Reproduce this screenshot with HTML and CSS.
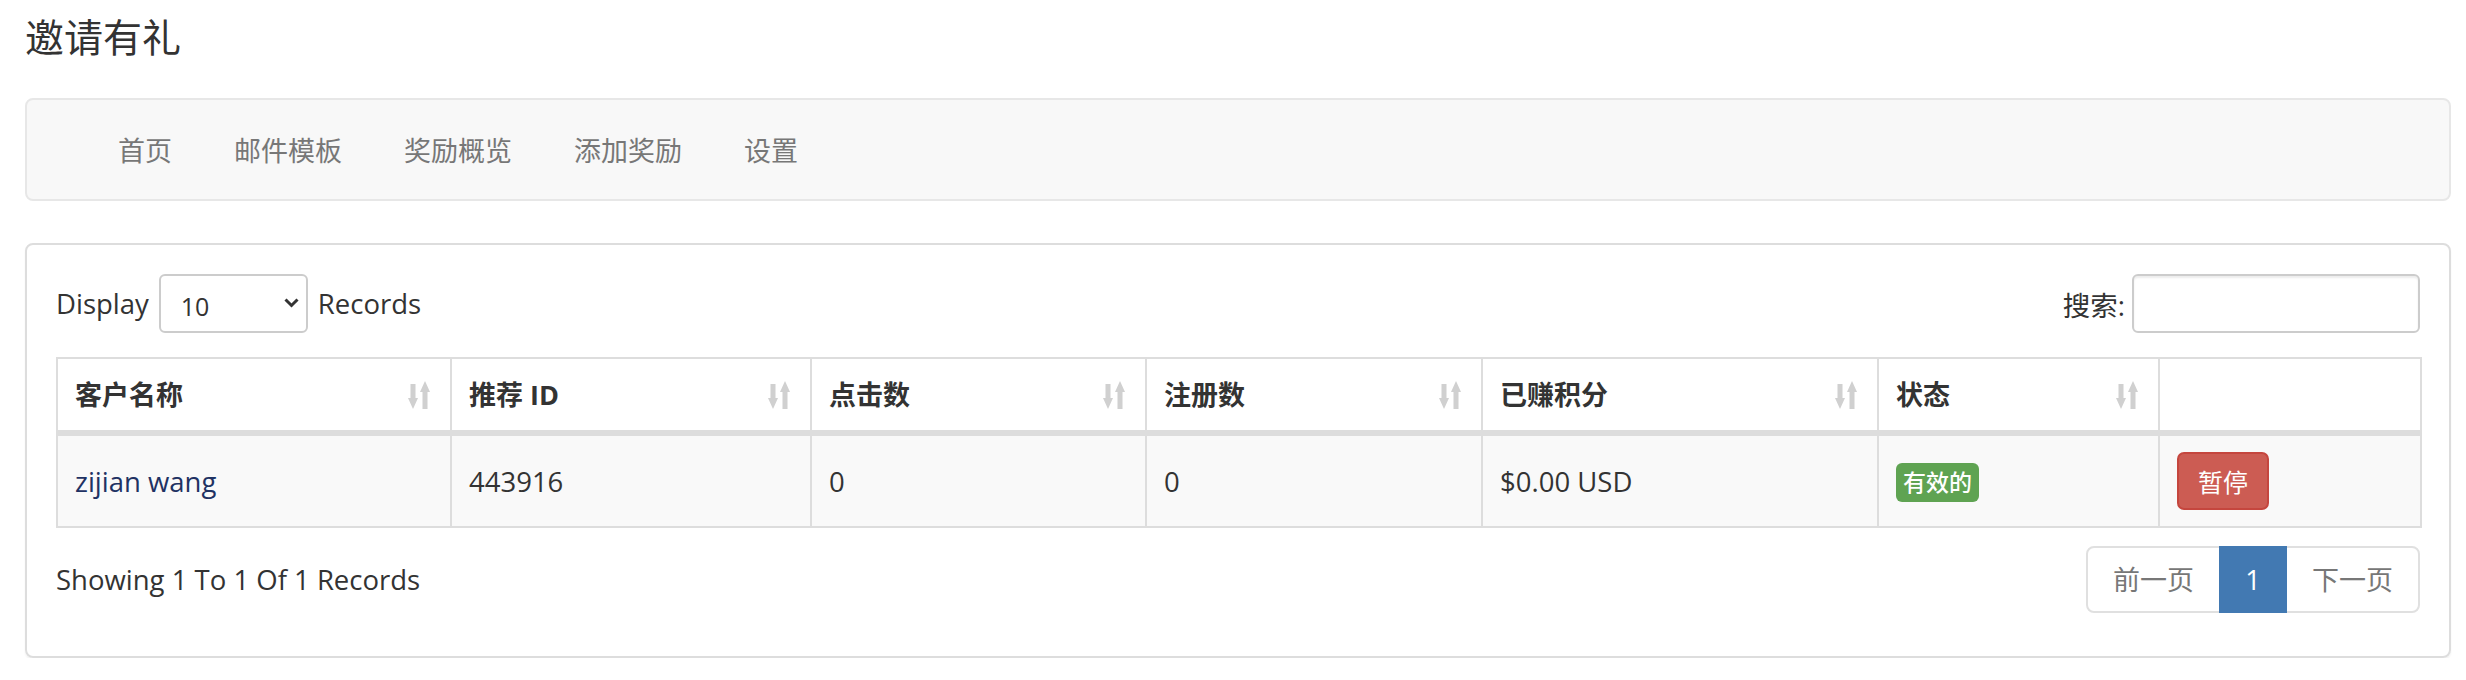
FILE: index.html
```html
<!DOCTYPE html>
<html lang="zh-CN">
<head>
  <meta charset="UTF-8" />
  <title>邀请有礼</title>
  <meta name="viewport" content="width=device-width, initial-scale=1.0" />
  <link rel="stylesheet" href="styles.css">
</head>
<body>
  <div class="page">
    <h1 class="page-title">邀请有礼</h1>

    <nav class="subnav">
      <ul>
        <li><a href="#">首页</a></li>
        <li><a href="#">邮件模板</a></li>
        <li><a href="#">奖励概览</a></li>
        <li><a href="#">添加奖励</a></li>
        <li><a href="#">设置</a></li>
      </ul>
    </nav>

    <div class="panel">
      <div class="toolbar">
        <label class="length">
          Display
          <span class="select-wrap">
            <select>
              <option>10</option>
              <option>25</option>
              <option>50</option>
              <option>100</option>
            </select>
            <svg class="chevron" width="15" height="10" viewBox="0 0 15 10"><path d="M1.5 1.5 L7.5 7.5 L13.5 1.5" fill="none" stroke="#333" stroke-width="3"/></svg>
          </span>
          Records
        </label>
        <label class="search">搜索: <input type="text"></label>
      </div>

      <table class="grid">
        <colgroup>
          <col style="width: 394px">
          <col style="width: 360px">
          <col style="width: 335px">
          <col style="width: 336px">
          <col style="width: 396px">
          <col style="width: 281px">
          <col style="width: 262px">
        </colgroup>
        <thead>
          <tr>
            <th><div class="th-inner"><span>客户名称</span> <svg class="sort" viewBox="0 0 22 28"><rect x="2.5" y="3" width="5" height="17"/><path d="M0 17 H10 L5 28 Z"/><path d="M12 11 H22 L17 0 Z"/><rect x="14.5" y="8" width="5" height="20"/></svg></div></th>
            <th><div class="th-inner"><span>推荐 ID</span> <svg class="sort" viewBox="0 0 22 28"><rect x="2.5" y="3" width="5" height="17"/><path d="M0 17 H10 L5 28 Z"/><path d="M12 11 H22 L17 0 Z"/><rect x="14.5" y="8" width="5" height="20"/></svg></div></th>
            <th><div class="th-inner"><span>点击数</span> <svg class="sort" viewBox="0 0 22 28"><rect x="2.5" y="3" width="5" height="17"/><path d="M0 17 H10 L5 28 Z"/><path d="M12 11 H22 L17 0 Z"/><rect x="14.5" y="8" width="5" height="20"/></svg></div></th>
            <th><div class="th-inner"><span>注册数</span> <svg class="sort" viewBox="0 0 22 28"><rect x="2.5" y="3" width="5" height="17"/><path d="M0 17 H10 L5 28 Z"/><path d="M12 11 H22 L17 0 Z"/><rect x="14.5" y="8" width="5" height="20"/></svg></div></th>
            <th><div class="th-inner"><span>已赚积分</span> <svg class="sort" viewBox="0 0 22 28"><rect x="2.5" y="3" width="5" height="17"/><path d="M0 17 H10 L5 28 Z"/><path d="M12 11 H22 L17 0 Z"/><rect x="14.5" y="8" width="5" height="20"/></svg></div></th>
            <th><div class="th-inner"><span>状态</span> <svg class="sort" viewBox="0 0 22 28"><rect x="2.5" y="3" width="5" height="17"/><path d="M0 17 H10 L5 28 Z"/><path d="M12 11 H22 L17 0 Z"/><rect x="14.5" y="8" width="5" height="20"/></svg></div></th>
            <th></th>
          </tr>
        </thead>
        <tbody>
          <tr>
            <td><a href="#" class="client">zijian wang</a></td>
            <td>443916</td>
            <td>0</td>
            <td>0</td>
            <td>$0.00 USD</td>
            <td><span class="label-ok">有效的</span></td>
            <td><button class="btn-danger">暂停</button></td>
          </tr>
        </tbody>
      </table>

      <div class="footer">
        <span class="info">Showing 1 To 1 Of 1 Records</span>
        <ul class="pager">
          <li><a href="#">前一页</a></li>
          <li class="active"><a href="#">1</a></li>
          <li><a href="#">下一页</a></li>
        </ul>
      </div>
    </div>
  </div>
</body>
</html>
```

FILE: styles.css
```css
body {
  margin: 0;
  background: #fff;
  color: #333;
  font-family: "Open Sans", "Noto Sans CJK SC", sans-serif;
  font-size: 27.5px;
}

.page {
  padding: 12px 15px 0 25px;
}

.page-title {
  margin: 0;
  font-size: 39px;
  font-weight: normal;
  line-height: 50px;
  color: #333;
}

/* sub navigation bar */
.subnav {
  margin-top: 36px;
  height: 103px;
  box-sizing: border-box;
  display: flex;
  align-items: center;
  background: #f8f8f8;
  border: 2px solid #e7e7e7;
  border-radius: 8px;
}

.subnav ul {
  list-style: none;
  margin: 0;
  padding: 0 0 0 60px;
  display: flex;
}

.subnav a {
  display: block;
  padding: 0 31px;
  color: #777;
  font-size: 27px;
  text-decoration: none;
}

/* main panel */
.panel {
  margin-top: 42px;
  padding: 29px 29px 43px;
  border: 2px solid #ddd;
  border-radius: 8px;
  box-shadow: 0 2px 2px rgba(0, 0, 0, 0.05);
}

.toolbar {
  display: flex;
  justify-content: space-between;
  align-items: center;
  height: 59px;
  margin-bottom: 24px;
}

.length,
.search {
  display: flex;
  align-items: center;
  gap: 10px;
}

.search {
  gap: 7px;
}

.select-wrap {
  position: relative;
  display: block;
}

.select-wrap select {
  appearance: none;
  -webkit-appearance: none;
  display: block;
  width: 149px;
  height: 59px;
  padding: 4px 0 0 20px;
  border: 2px solid #ccc;
  border-radius: 6px;
  background: #fff;
  color: #333;
  font-family: "Open Sans", sans-serif;
  font-size: 25px;
}

.chevron {
  position: absolute;
  right: 9px;
  top: 24px;
  pointer-events: none;
}

.search input {
  width: 288px;
  height: 59px;
  box-sizing: border-box;
  border: 2px solid #ccc;
  border-radius: 6px;
  box-shadow: inset 0 2px 2px rgba(0, 0, 0, 0.075);
  outline: none;
}

/* table */
.grid {
  width: 100%;
  table-layout: fixed;
  border-collapse: collapse;
}

.grid th,
.grid td {
  border: 2px solid #ddd;
  text-align: left;
  line-height: 37px;
}

.grid th {
  padding: 17px 20px 17px 17px;
  border-bottom-width: 6px;
  font-size: 27px;
  font-weight: bold;
}

.th-inner {
  display: flex;
  justify-content: space-between;
  align-items: center;
}

.sort {
  flex: none;
  width: 22px;
  height: 28px;
  fill: #d0d0d0;
}

.grid td {
  padding: 16px 17px;
  vertical-align: middle;
  background: #f9f9f9;
}

.client {
  color: #1f3263;
  text-decoration: none;
}

.label-ok {
  display: inline-block;
  padding: 0 7px;
  height: 39px;
  line-height: 39px;
  border-radius: 6px;
  background: #5fa352;
  color: #fff;
  font-size: 23px;
  font-weight: 500;
  vertical-align: middle;
}

.btn-danger {
  width: 92px;
  height: 58px;
  border: 2px solid #c5463e;
  border-radius: 7px;
  background: #cc5c53;
  color: #fff;
  font-family: "Open Sans", "Noto Sans CJK SC", sans-serif;
  font-size: 25px;
  vertical-align: middle;
}

/* footer with paging */
.footer {
  display: flex;
  justify-content: space-between;
  align-items: center;
  height: 67px;
  margin-top: 18px;
}

.pager {
  list-style: none;
  margin: 0;
  padding: 0;
  display: flex;
  font-size: 27px;
}

.pager a {
  display: block;
  height: 67px;
  line-height: 63px;
  box-sizing: border-box;
  padding: 0 25px;
  border: 2px solid #e0e0e0;
  margin-left: -2px;
  color: #777;
  text-decoration: none;
}

.pager li:first-child a {
  margin-left: 0;
  border-radius: 8px 0 0 8px;
}

.pager li:last-child a {
  border-radius: 0 8px 8px 0;
}

.pager .active a {
  width: 68px;
  padding: 0;
  text-align: center;
  background: #4279b2;
  border-color: #4279b2;
  color: #fff;
  position: relative;
}
```
